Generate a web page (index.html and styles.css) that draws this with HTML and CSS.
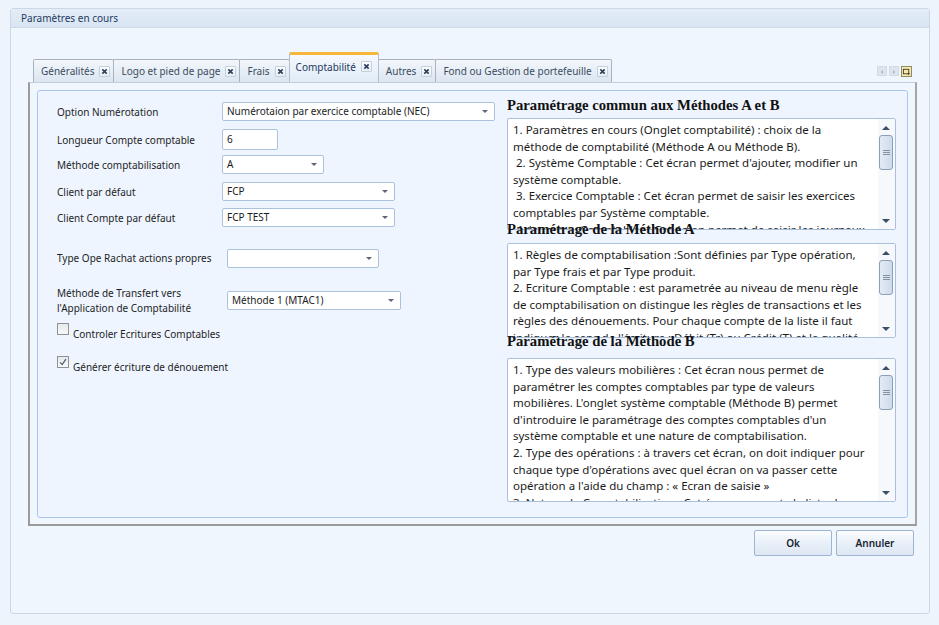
FILE: index.html
```html
<!DOCTYPE html>
<html lang="fr">
<head>
  <meta charset="UTF-8" />
  <title>Paramètres en cours</title>
  <link rel="stylesheet" href="styles.css">
</head>
<body>

  <div class="window">
    <div class="titlebar">Paramètres en cours</div>

    <div class="window-body">
      <div class="tabstrip">
        <div class="tabs">
          <div class="tab">Généralités<span class="close"><svg viewBox="0 0 8 8"><path d="M1.5 1.5L6.5 6.5M6.5 1.5L1.5 6.5"/></svg></span></div>
          <div class="tab">Logo et pied de page<span class="close"><svg viewBox="0 0 8 8"><path d="M1.5 1.5L6.5 6.5M6.5 1.5L1.5 6.5"/></svg></span></div>
          <div class="tab">Frais<span class="close"><svg viewBox="0 0 8 8"><path d="M1.5 1.5L6.5 6.5M6.5 1.5L1.5 6.5"/></svg></span></div>
          <div class="tab active">Comptabilité<span class="close"><svg viewBox="0 0 8 8"><path d="M1.5 1.5L6.5 6.5M6.5 1.5L1.5 6.5"/></svg></span></div>
          <div class="tab">Autres<span class="close"><svg viewBox="0 0 8 8"><path d="M1.5 1.5L6.5 6.5M6.5 1.5L1.5 6.5"/></svg></span></div>
          <div class="tab">Fond ou Gestion de portefeuille<span class="close"><svg viewBox="0 0 8 8"><path d="M1.5 1.5L6.5 6.5M6.5 1.5L1.5 6.5"/></svg></span></div>
        </div>
        <div class="tabnav">
          <span class="navbtn"><svg viewBox="0 0 10 10"><path d="M6 2.5L3.5 5L6 7.5Z"/></svg></span>
          <span class="navbtn"><svg viewBox="0 0 10 10"><path d="M4 2.5L6.5 5L4 7.5Z"/></svg></span>
          <span class="navbtn list"><svg viewBox="0 0 10 10"><rect x="1.5" y="2" width="6" height="5" fill="none" stroke="#3a3a3a" stroke-width="1"/><path d="M6 6.5h3L7.5 8.5Z" fill="#3a3a3a"/></svg></span>
        </div>
      </div>

      <div class="tabframe">
        <div class="panel">

          <div class="form">
            <div class="row r1">
              <label>Option Numérotation</label>
              <div class="select w-wide">Numérotaion par exercice comptable (NEC)<span class="arrow"></span></div>
            </div>
            <div class="row r2">
              <label>Longueur Compte comptable</label>
              <div class="input">6</div>
            </div>
            <div class="row r3">
              <label>Méthode comptabilisation</label>
              <div class="select w-small">A<span class="arrow"></span></div>
            </div>
            <div class="row r4">
              <label>Client par défaut</label>
              <div class="select w-mid">FCP<span class="arrow"></span></div>
            </div>
            <div class="row r5">
              <label>Client Compte par défaut</label>
              <div class="select w-mid">FCP TEST<span class="arrow"></span></div>
            </div>
            <div class="row r6">
              <label class="lbl-wide">Type Ope Rachat actions propres</label>
              <div class="select w-rachat"><span class="arrow"></span></div>
            </div>
            <div class="row r7">
              <label class="lbl-wide">Méthode de Transfert vers<br>l'Application de Comptabilité</label>
              <div class="select w-transfert">Méthode 1 (MTAC1)<span class="arrow"></span></div>
            </div>
            <div class="check c1">
              <span class="box"></span>
              <span class="check-label">Controler Ecritures Comptables</span>
            </div>
            <div class="check c2">
              <span class="box checked"><svg viewBox="0 0 12 12"><path d="M2.5 6.5L5 9L9.5 2.5"/></svg></span>
              <span class="check-label">Générer écriture de dénouement</span>
            </div>
          </div>

          <div class="help">
            <h2 class="h-first">Paramétrage commun aux Méthodes A et B</h2>
            <div class="memo memo-a">
              <div class="memo-text">
                1. Paramètres en cours (Onglet comptabilité) : choix de la<br>
                méthode de comptabilité (Méthode A ou Méthode B).<br>
                &nbsp;2. Système Comptable : Cet écran permet d'ajouter, modifier un<br>
                système comptable.<br>
                &nbsp;3. Exercice Comptable : Cet écran permet de saisir les exercices<br>
                comptables par Système comptable.<br>
                &nbsp;4. Journaux Comptables : Cet écran permet de saisir les journaux<br>
                comptables par Système comptable.
              </div>
              <div class="scrollbar">
                <span class="sb-arrow up"></span>
                <span class="sb-thumb"><i></i></span>
                <span class="sb-track"></span>
                <span class="sb-arrow down"></span>
              </div>
            </div>

            <h2 class="h-a">Paramétrage de la  Méthode A</h2>
            <div class="memo memo-b">
              <div class="memo-text">
                1. Règles de comptabilisation :Sont définies par Type opération,<br>
                par Type frais et par Type produit.<br>
                2. Ecriture Comptable : est parametrée au niveau de menu règle<br>
                de comptabilisation on distingue les règles de transactions et les<br>
                règles des dénouements. Pour chaque compte de la liste il faut<br>
                indiquer le sens de l'écriture : Débit (Tr) ou Crédit (T) et la qualité.
              </div>
              <div class="scrollbar">
                <span class="sb-arrow up"></span>
                <span class="sb-thumb"><i></i></span>
                <span class="sb-track"></span>
                <span class="sb-arrow down"></span>
              </div>
            </div>

            <h2 class="h-b">Paramétrage de la  Méthode B</h2>
            <div class="memo memo-c">
              <div class="memo-text">
                1. Type des valeurs mobilières : Cet écran nous permet de<br>
                paramétrer les comptes comptables par type de valeurs<br>
                mobilières. L'onglet système comptable (Méthode B) permet<br>
                d'introduire le paramétrage des comptes comptables d'un<br>
                système comptable et une nature de comptabilisation.<br>
                2. Type des opérations : à travers cet écran, on doit indiquer pour<br>
                chaque type d'opérations avec quel écran on va passer cette<br>
                opération a l'aide du champ : « Ecran de saisie »<br>
                3. Nature de Comptabilisation : Cet écran comporte la liste des
              </div>
              <div class="scrollbar">
                <span class="sb-arrow up"></span>
                <span class="sb-thumb"><i></i></span>
                <span class="sb-track"></span>
                <span class="sb-arrow down"></span>
              </div>
            </div>
          </div>

        </div>
      </div>

      <div class="actions">
        <button>Ok</button>
        <button>Annuler</button>
      </div>
    </div>
  </div>

</body>
</html>
```

FILE: styles.css
```css
* { box-sizing: border-box; }
body, html {
  margin: 0; padding: 0;
  font-family: "Noto Sans", "Open Sans", sans-serif;
  font-size: 10px;
  color: #1e1e1e;
  background: #eef4fb;
}
.window {
  margin: 8px 9px 0 10px;
  height: 606px;
  border: 1px solid #cad7e7;
  border-radius: 3px;
  background: #eff6fe;
}
.titlebar {
  height: 19px;
  line-height: 18px;
  padding-left: 10px;
  font-size: 10px;
  color: #1e3a5f;
  background: linear-gradient(#e3ecf7, #d9e5f3);
  border-bottom: 1px solid #cdd9e8;
}
.window-body {
  padding: 24px 12px 0 17px;
}

/* tabs */
.tabstrip {
  height: 30px;
  display: flex;
  align-items: flex-end;
  padding-left: 5px;
}
.tabs {
  display: flex;
  align-items: flex-end;
}
.tab {
  height: 23px;
  display: flex;
  align-items: center;
  gap: 5px;
  padding: 0 3px 0 7px;
  font-size: 10px;
  color: #3c4c60;
  background: linear-gradient(#f3f7fc, #dbe5f1);
  border: 1px solid #a9b2bd;
  border-bottom: none;
  border-radius: 2px 2px 0 0;
  margin-right: -1px;
}
.tab.active {
  height: 30px;
  padding: 0 6px 4px 6px;
  color: #1e3a5f;
  background: linear-gradient(#f6f9fd, #e0ebf8);
  border-top: 3px solid #f7b73c;
  border-color: #f7b73c #b7c0ca #b7c0ca #b7c0ca;
  position: relative;
  z-index: 1;
}
.close {
  width: 11px;
  height: 11px;
  display: inline-flex;
  align-items: center;
  justify-content: center;
  border: 1px solid #c5d0dd;
  border-radius: 1px;
  background: linear-gradient(#ffffff, #e8eef6);
}
.close svg {
  width: 7px;
  height: 7px;
  stroke: #2c405c;
  stroke-width: 1.9;
  fill: none;
}
.tabnav {
  margin-left: auto;
  margin-right: 5px;
  margin-bottom: 5px;
  display: flex;
  gap: 2px;
}
.navbtn {
  width: 10px;
  height: 10px;
  display: inline-flex;
  background: #dfe5ec;
  border: 1px solid #d5dbe3;
}
.navbtn svg { width: 10px; height: 10px; fill: #a7b0bb; }
.navbtn.list {
  width: 11px;
  height: 11px;
  background: #fbeaa5;
  border-color: #8f8a6a;
}

/* frame */
.tabframe {
  height: 444px;
  border: 2px solid #9b9b9b;
  border-top: 1px solid #c3cedb;
  border-right-color: #a5a5a5;
  padding: 7px 7px 6px 7px;
  background: #eff6fe;
}
.panel {
  height: 100%;
  display: flex;
  border: 1px solid #a9c7ec;
  border-radius: 3px;
  background: #eef5fe;
  padding: 6px 11px 0 19px;
}

/* form */
.form {
  flex: 1;
  padding-top: 5px;
}
.row {
  display: flex;
  align-items: center;
}
.row label { width: 165px; }
.row .lbl-wide { width: 170px; line-height: 15px; }
.r1 { height: 19px; }
.r2 { height: 21px; margin-top: 8px; }
.r3 { height: 19px; margin-top: 5px; }
.r4 { height: 19px; margin-top: 8px; }
.r5 { height: 19px; margin-top: 7px; }
.r6 { height: 19px; margin-top: 22px; }
.r7 { height: 31px; margin-top: 17px; }
.select, .input {
  position: relative;
  height: 19px;
  line-height: 17px;
  padding-left: 4px;
  background: #fff;
  border: 1px solid #abc2df;
  border-radius: 2px;
  color: #1b1b1b;
}
.input { height: 21px; line-height: 19px; width: 56px; }
.w-wide { width: 273px; }
.w-small { width: 102px; }
.w-mid { width: 173px; }
.w-rachat { width: 152px; }
.w-transfert { width: 174px; }
.arrow {
  position: absolute;
  right: 6px;
  top: 7px;
  border-left: 3px solid transparent;
  border-right: 3px solid transparent;
  border-top: 3px solid #5b6776;
}
.check {
  display: flex;
  align-items: flex-start;
  gap: 4px;
  height: 16px;
}
.check-label {
  margin-top: 4px;
  line-height: 14px;
}
.c1 { margin-top: 7px; }
.c2 { margin-top: 17px; }
.box {
  width: 12px;
  height: 12px;
  border: 1px solid #8e9299;
  background: linear-gradient(#e6e8eb, #f7f8f9);
  display: inline-flex;
}
.box svg {
  width: 10px;
  height: 10px;
  fill: none;
  stroke: #4a5a6e;
  stroke-width: 1.4;
}

/* help column */
.help { width: 389px; }
.help h2 {
  margin: 0;
  font-family: "Liberation Serif", "DejaVu Serif", serif;
  font-size: 14.7px;
  font-weight: bold;
  line-height: 16px;
  color: #111;
}
.help .h-first { margin-bottom: 5px; }
.help .h-a { margin-top: -9px; margin-bottom: 6px; }
.help .h-b { margin-top: -5px; margin-bottom: 9px; }
.memo {
  display: flex;
  background: #fff;
  border: 1px solid #a8c0de;
  border-radius: 2px;
  overflow: hidden;
}
.memo-a { height: 112px; }
.memo-b { height: 95px; }
.memo-c { height: 144px; }
.memo-text {
  flex: 1;
  padding: 3px 0 0 5px;
  white-space: nowrap;
  line-height: 16.6px;
  font-size: 11.5px;
  color: #1b1b1b;
  overflow: hidden;
}
.scrollbar {
  width: 17px;
  display: flex;
  flex-direction: column;
  padding: 1px 2px 1px 1px;
  background: #f6f8fb;
}
.sb-arrow {
  height: 15px;
  display: flex;
  align-items: center;
  justify-content: center;
}
.sb-arrow::after {
  content: "";
  border-left: 4px solid transparent;
  border-right: 4px solid transparent;
}
.sb-arrow.up::after { border-bottom: 4px solid #3b4f69; }
.sb-arrow.down::after { border-top: 4px solid #3b4f69; }
.sb-thumb {
  height: 35px;
  display: flex;
  align-items: center;
  justify-content: center;
  border: 1px solid #8c9fb8;
  border-radius: 3px;
  background: linear-gradient(90deg, #e3ebf5, #cfdbeb);
}
.sb-thumb i {
  width: 7px;
  height: 5px;
  border-top: 1px solid #8494a8;
  border-bottom: 1px solid #8494a8;
  background: linear-gradient(transparent 1px, #8494a8 1px, #8494a8 2px, transparent 2px);
}
.sb-track { flex: 1; }

/* buttons */
.actions {
  display: flex;
  justify-content: flex-end;
  gap: 4px;
  padding: 4px 3px 0 0;
}
.actions button {
  width: 78px;
  height: 26px;
  font-family: "Noto Sans", sans-serif;
  font-size: 10px;
  font-weight: 600;
  color: #1b2533;
  border: 1px solid #9fb4d0;
  border-radius: 2px;
  background: linear-gradient(#fbfdff, #e9f0f8 50%, #dde7f3);
}
```
